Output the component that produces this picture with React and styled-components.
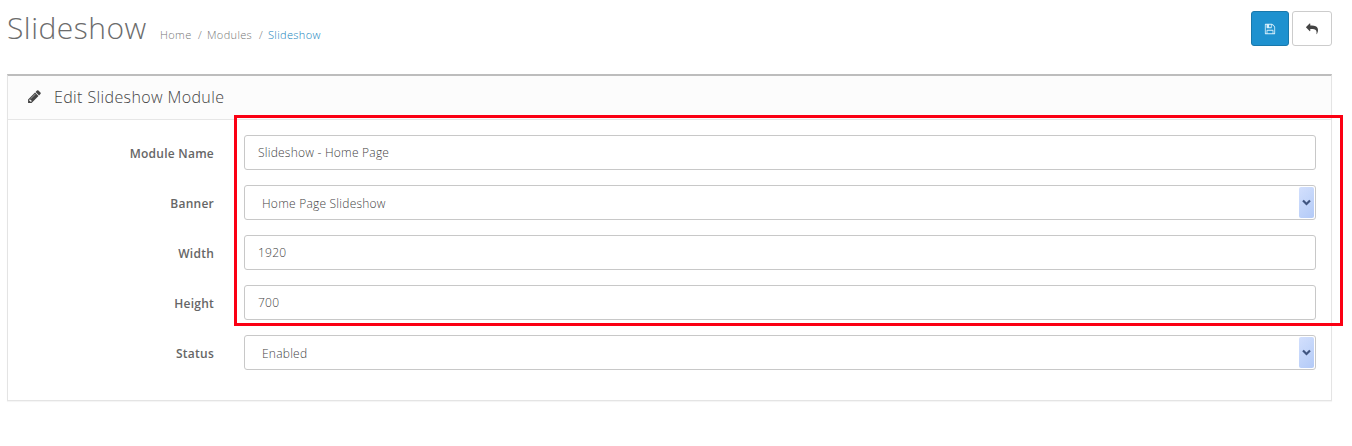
import React from "react";
import styled, { createGlobalStyle } from "styled-components";

const GlobalStyle = createGlobalStyle`
  * { box-sizing: border-box; }
  body { margin: 0; background: #fff; }
`;

const Page = styled.div`
  position: relative;
  width: 1352px;
  height: 446px;
  padding: 11px 20px 0 7px;
  overflow: hidden;
  font-family: "Open Sans", sans-serif;
  font-size: 12px;
  font-weight: 300;
  color: #555;
`;

const PageHeader = styled.header`
  display: flex;
  align-items: flex-start;
  height: 63px;
`;

const Title = styled.h1`
  width: 153px;
  margin: 0;
  font-size: 30px;
  font-weight: 300;
  line-height: 34px;
  letter-spacing: 0.5px;
  color: #6c6c6c;
  white-space: nowrap;
`;

const Breadcrumb = styled.nav`
  display: flex;
  flex: 1;
  padding-top: 16px;
  font-size: 11px;
  line-height: 16px;
  letter-spacing: 0.35px;
  white-space: pre;
`;

const Crumb = styled.span`
  width: ${(p) => p.$width}px;
  color: ${(p) => (p.$active ? "#1583bd" : "#777")};
`;

const Button = styled.button`
  display: flex;
  align-items: center;
  justify-content: center;
  width: ${(p) => (p.$primary ? 38 : 40)}px;
  height: 35px;
  margin: 0 0 0 3px;
  padding: 0;
  border: 1px solid ${(p) => (p.$primary ? "#1978ab" : "#ccc")};
  border-radius: 3px;
  background: ${(p) => (p.$primary ? "#1e91cf" : "#fff")};
  color: ${(p) => (p.$primary ? "#d9f0fb" : "#444")};
`;

const Panel = styled.section`
  height: 327px;
  border: 1px solid #e4e4e4;
  border-top: 2px solid #bdbdbd;
  box-shadow: 0 1px 1px rgba(0, 0, 0, 0.04);
`;

const PanelHeading = styled.h3`
  display: flex;
  align-items: center;
  height: 44px;
  margin: 0;
  padding: 0 0 2px 19px;
  gap: 12px;
  border-bottom: 1px solid #e6e6e6;
  background: #fcfcfc;
  font-size: 16px;
  font-weight: 300;
  letter-spacing: 0.38px;
  color: #444;
`;

const Form = styled.form`
  display: flex;
  flex-direction: column;
  gap: 15px;
  padding: 15px 15px 0 0;
`;

const Row = styled.div`
  display: grid;
  grid-template-columns: 206px 1072px;
  column-gap: 30px;
  height: 35px;
`;

const Label = styled.label`
  padding-top: 10px;
  font-weight: 600;
  line-height: 17px;
  letter-spacing: 0.25px;
  text-align: right;
  color: #666;
`;

const Field = styled.div`
  display: flex;
  justify-content: space-between;
  height: 35px;
  padding: 1px 1px 1px ${(p) => (p.$select ? 17 : 13)}px;
  border: 1px solid #c8c8c8;
  border-radius: 3px;
  background: #fff;
  line-height: ${(p) => (p.$select ? 33 : 31)}px;
  letter-spacing: 0.23px;
  color: #444;
`;

const Arrow = styled.span`
  display: flex;
  align-items: center;
  justify-content: center;
  width: 15px;
  height: 31px;
  border-radius: 2px;
  background: linear-gradient(135deg, #d3e0fd, #b3caf7);
  color: #405580;
`;

const Highlight = styled.div`
  position: absolute;
  left: 234px;
  top: 115px;
  width: 1109px;
  height: 211px;
  border: 3px solid #fb0013;
  pointer-events: none;
`;

const ICONS = {
  pencil:
    "M491 1536l91-91-235-235-91 91v107h128v128h107zm523-928q0-22-22-22-10 0-17 7l-542 542q-7 7-7 17 0 22 22 22 10 0 17-7l542-542q7-7 7-17zm-54-192l416 416-832 832h-416v-416zm683 96q0 53-37 90l-166 166-416-416 166-165q36-38 90-38 53 0 91 38l235 234q37 39 37 91z",
  save: "M512 1536h768v-384h-768v384zm896 0h128v-896q0-14-10-38.5t-20-34.5l-281-281q-10-10-34-20t-39-10v416q0 40-28 68t-68 28h-576q-40 0-68-28t-28-68v-416h-128v1280h128v-416q0-40 28-68t68-28h832q40 0 68 28t28 68v416zm-384-928v-320q0-13-9.5-22.5t-22.5-9.5h-192q-13 0-22.5 9.5t-9.5 22.5v320q0 13 9.5 22.5t22.5 9.5h192q13 0 22.5-9.5t9.5-22.5zm640 32v928q0 40-28 68t-68 28h-1344q-40 0-68-28t-28-68v-1344q0-40 28-68t68-28h928q40 0 88 20t76 48l280 280q28 28 48 76t20 88z",
  reply:
    "M1792 1120q0 166-127 451-3 7-10.5 24t-13.5 30-13 22q-12 17-28 17-15 0-23.5-10t-8.5-25q0-9 2.5-26.5t2.5-23.5q5-68 5-123 0-101-17.5-181t-48.5-138.5-80-101-105.5-69.5-133-42.5-154-21.5-175.5-6h-224v256q0 26-19 45t-45 19-45-19l-512-512q-19-19-19-45t19-45l512-512q19-19 45-19t45 19 19 45v256h224q713 0 875 403 53 134 53 333z",
};

const Icon = ({ name, size }) => (
  <svg width={size} height={size} viewBox="0 0 1792 1792" fill="currentColor" aria-hidden="true">
    <path d={ICONS[name]} />
  </svg>
);

const FIELDS = [
  { label: "Module Name", value: "Slideshow - Home Page" },
  { label: "Banner", value: "Home Page Slideshow", select: true },
  { label: "Width", value: "1920" },
  { label: "Height", value: "700" },
  { label: "Status", value: "Enabled", select: true },
];

export default function App() {
  return (
    <Page>
      <GlobalStyle />
      <PageHeader>
        <Title>Slideshow</Title>
        <Breadcrumb>
          <Crumb $width={38}>Home</Crumb>
          <Crumb $width={9}>/</Crumb>
          <Crumb $width={52}>Modules</Crumb>
          <Crumb $width={9}>/</Crumb>
          <Crumb $active>Slideshow</Crumb>
        </Breadcrumb>
        <Button $primary aria-label="Save">
          <Icon name="save" size={12} />
        </Button>
        <Button aria-label="Back">
          <Icon name="reply" size={12} />
        </Button>
      </PageHeader>
      <Panel>
        <PanelHeading>
          <Icon name="pencil" size={15} />
          Edit Slideshow Module
        </PanelHeading>
        <Form>
          {FIELDS.map(({ label, value, select }) => (
            <Row key={label}>
              <Label>{label}</Label>
              <Field $select={select}>
                {value}
                {select && (
                  <Arrow>
                    <svg width="9" height="7" viewBox="0 0 9 7" fill="none">
                      <path d="M1 1.5 4.5 5 8 1.5" stroke="currentColor" strokeWidth="2.2" />
                    </svg>
                  </Arrow>
                )}
              </Field>
            </Row>
          ))}
        </Form>
      </Panel>
      <Highlight />
    </Page>
  );
}
